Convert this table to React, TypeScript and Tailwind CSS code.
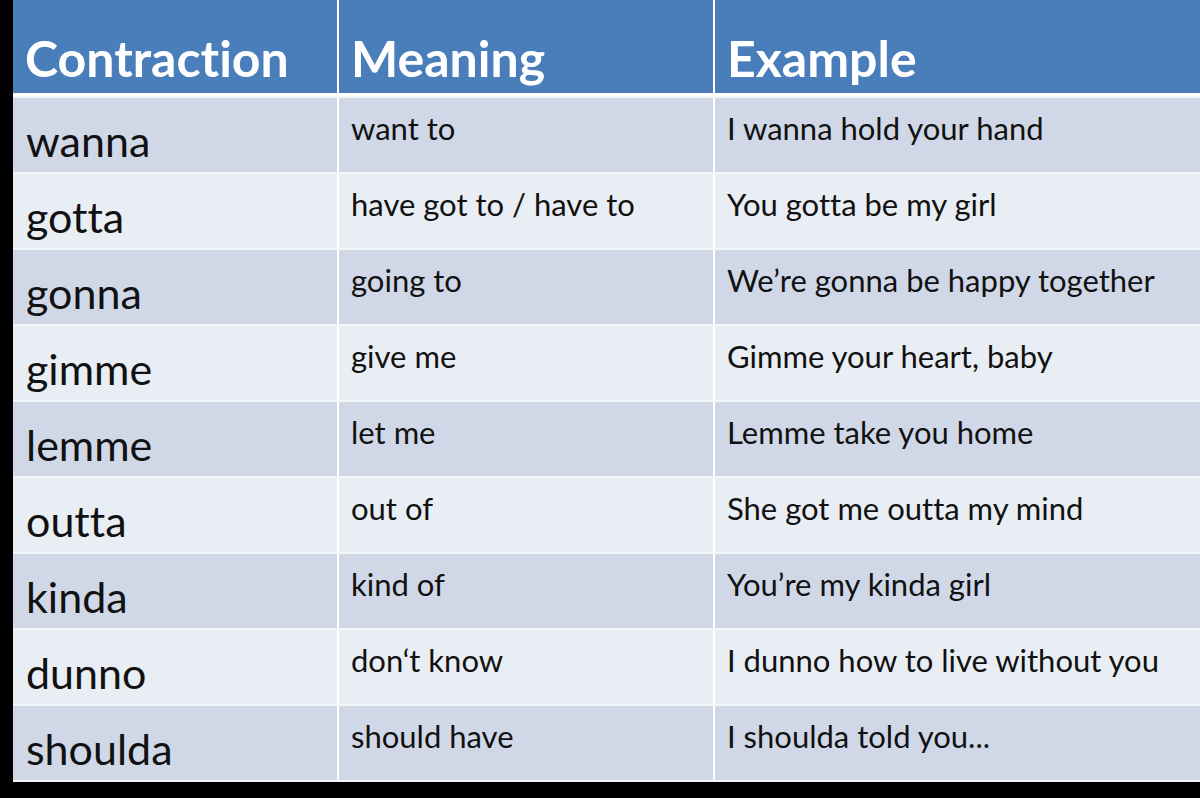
const rows = [
  { word: 'wanna', meaning: 'want to', example: 'I wanna hold your hand' },
  { word: 'gotta', meaning: 'have got to / have to', example: 'You gotta be my girl' },
  { word: 'gonna', meaning: 'going to', example: 'We\u2019re gonna be happy together' },
  { word: 'gimme', meaning: 'give me', example: 'Gimme your heart, baby' },
  { word: 'lemme', meaning: 'let me', example: 'Lemme take you home' },
  { word: 'outta', meaning: 'out of', example: 'She got me outta my mind' },
  { word: 'kinda', meaning: 'kind of', example: 'You\u2019re my kinda girl' },
  { word: 'dunno', meaning: 'don\u2018t know', example: 'I dunno how to live without you' },
  { word: 'shoulda', meaning: 'should have', example: 'I shoulda told you...' },
];

export default function App() {
  return (
    <div className="w-[1200px] h-[798px] bg-black pl-[13px] pb-[18px] overflow-hidden font-['Lato','Liberation_Sans',sans-serif] [font-variant-ligatures:none] text-[#111111]">
      <div className="bg-[#f4f6fa] flex flex-col gap-[2px] pb-[2px]">
        <div className="grid grid-cols-[324px_374px_1fr] gap-x-[2px] bg-white pb-[3px]">
          {['Contraction', 'Meaning', 'Example'].map((h) => (
            <div key={h} className="h-[93px] bg-[#4a7ebb] text-white font-bold text-[50px] leading-none pt-[33px] pl-[12px]">
              {h}
            </div>
          ))}
        </div>
        {rows.map((r, i) => (
          <div key={r.word} className="grid grid-cols-[324px_374px_1fr] gap-x-[2px] bg-white">
            <div className={`h-[74px] ${i % 2 === 0 ? 'bg-[#d0d8e8]' : 'bg-[#e9edf4]'} text-[43px] leading-none pt-[21px] pl-[13px]`}>
              {r.word}
            </div>
            <div className={`h-[74px] ${i % 2 === 0 ? 'bg-[#d0d8e8]' : 'bg-[#e9edf4]'} text-[31px] leading-none pt-[15px] pl-[12px]`}>
              {r.meaning}
            </div>
            <div className={`h-[74px] ${i % 2 === 0 ? 'bg-[#d0d8e8]' : 'bg-[#e9edf4]'} text-[31px] leading-none pt-[15px] pl-[12px]`}>
              {r.example}
            </div>
          </div>
        ))}
      </div>
    </div>
  );
}
